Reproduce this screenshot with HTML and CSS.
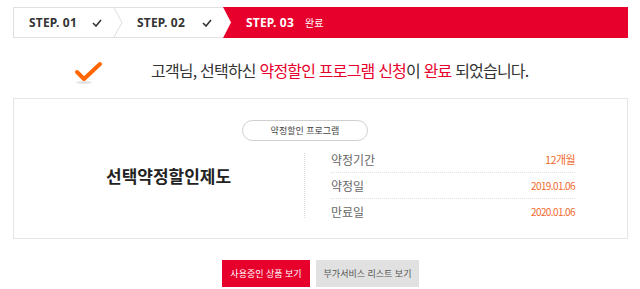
FILE: index.html
```html
<!DOCTYPE html>
<html lang="ko">

<head>
    <meta charset="UTF-8">
    <meta name="viewport" content="width=device-width, initial-scale=1.0">
    <title>약정할인 신청 완료</title>
    <link rel="stylesheet" href="styles.css">
</head>

<body>
    <div class="page">
        <div class="steps">
            <div class="step step-one">
                <span class="step-name">STEP. 01</span>
                <svg class="step-check" width="10" height="8" viewBox="0 0 10 8"><polyline points="1,4 4,7 9,1" fill="none" stroke="#333" stroke-width="1.6"/></svg>
                <svg class="step-arrow" width="10" height="31" viewBox="0 0 10 31"><polyline points="0.5,0 9,15.5 0.5,31" fill="none" stroke="#ddd" stroke-width="1"/></svg>
            </div>
            <div class="step step-two">
                <span class="step-name">STEP. 02</span>
                <svg class="step-check" width="10" height="8" viewBox="0 0 10 8"><polyline points="1,4 4,7 9,1" fill="none" stroke="#333" stroke-width="1.6"/></svg>
            </div>
            <div class="step step-three">
                <span class="step-name">STEP. 03</span>
                <span class="step-state">완료</span>
            </div>
        </div>

        <div class="done">
            <svg class="done-check" width="30" height="24" viewBox="0 0 30 24">
                <ellipse cx="10" cy="21.5" rx="8" ry="1.5" fill="#e2e2e2"/>
                <polyline points="3,11 10,18 26,3" fill="none" stroke="#ff6600" stroke-width="4" stroke-linecap="round" stroke-linejoin="round"/>
            </svg>
            <p class="done-text">고객님, 선택하신 <em>약정할인 프로그램 신청</em>이 <em>완료</em> 되었습니다.</p>
        </div>

        <div class="summary">
            <div class="summary-tag">약정할인 프로그램</div>
            <div class="summary-body">
                <div class="summary-title">선택약정할인제도</div>
                <div class="summary-divider"></div>
                <ul class="summary-list">
                    <li><span class="label">약정기간</span><span class="value value-big">12개월</span></li>
                    <li><span class="label">약정일</span><span class="value">2019.01.06</span></li>
                    <li><span class="label">만료일</span><span class="value">2020.01.06</span></li>
                </ul>
            </div>
        </div>

        <div class="actions">
            <button class="btn btn-red">사용중인 상품 보기</button>
            <button class="btn btn-grey">부가서비스 리스트 보기</button>
        </div>
    </div>
</body>

</html>
```

FILE: styles.css
```css
body,
html {
    margin: 0;
    padding: 0;
    background-color: white;
    font-family: 'Noto Sans CJK KR', 'Noto Sans', sans-serif;
    color: #333;
}

.page {
    padding: 7px 12px 0 13px;
}

/* step bar */
.steps {
    display: flex;
    height: 31px;
    border: 1px solid #e0e0e0;
    box-sizing: border-box;
}

.step {
    position: relative;
    display: flex;
    align-items: center;
    justify-content: space-between;
    box-sizing: border-box;
}

.step-name {
    font-family: 'Noto Sans', sans-serif;
    font-weight: bold;
    font-size: 12px;
    letter-spacing: 0.2px;
}

.step-one {
    width: 99px;
    padding: 0 11px 0 15px;
}

.step-two {
    width: 110px;
    padding: 0 11px 0 24px;
}

.step-arrow {
    position: absolute;
    right: -10px;
    top: -1px;
}

.step-three {
    flex: 1;
    justify-content: flex-start;
    margin: -1px -1px -1px 0;
    padding-left: 23px;
    background-color: #e8002d;
    color: white;
    clip-path: polygon(0 0, 100% 0, 100% 100%, 0 100%, 8px 50%);
}

.step-state {
    margin-left: 11px;
    font-size: 10px;
}

/* done message */
.done {
    display: flex;
    align-items: center;
    height: 30px;
    margin-top: 17px;
    padding-left: 61px;
}

.done-check {
    margin-top: 6px;
}

.done-text {
    margin: 0 0 0 47px;
    font-size: 16px;
    letter-spacing: -0.8px;
    color: #333;
}

.done-text em {
    font-style: normal;
    color: #e8002d;
}

/* summary box */
.summary {
    margin-top: 13px;
    height: 141px;
    border: 1px solid #e5e5e5;
    box-sizing: border-box;
    padding-top: 21px;
}

.summary-tag {
    width: 126px;
    height: 21px;
    margin-left: 228px;
    border: 1px solid #cfcfcf;
    border-radius: 11px;
    box-sizing: border-box;
    font-size: 9px;
    line-height: 19px;
    text-align: center;
    color: #444;
}

.summary-body {
    display: flex;
    align-items: center;
    height: 77px;
    margin-top: 6px;
}

.summary-title {
    width: 198px;
    padding-left: 92px;
    margin-bottom: 21px;
    font-size: 17px;
    font-weight: bold;
    color: #222;
}

.summary-divider {
    height: 65px;
    border-left: 1px dotted #d8d8d8;
}

.summary-list {
    list-style: none;
    margin: 0 0 0 26px;
    padding: 0;
    width: 244px;
}

.summary-list li {
    display: flex;
    justify-content: space-between;
    align-items: center;
    height: 26px;
    border-bottom: 1px dotted #e2e2e2;
    box-sizing: border-box;
}

.summary-list li:last-child {
    border-bottom: none;
}

.label {
    font-size: 12px;
    color: #666;
}

.value {
    font-size: 10px;
    letter-spacing: -0.6px;
    color: #f26a2e;
}

.value-big {
    font-size: 11px;
}

/* buttons */
.actions {
    display: flex;
    justify-content: center;
    gap: 6px;
    margin-top: 21px;
}

.btn {
    height: 27px;
    border: none;
    padding: 0;
    font-family: 'Noto Sans CJK KR', sans-serif;
    font-size: 9px;
}

.btn-red {
    width: 88px;
    background-color: #e8002d;
    color: white;
}

.btn-grey {
    width: 103px;
    background-color: #e1e1e1;
    color: #555;
}
```
